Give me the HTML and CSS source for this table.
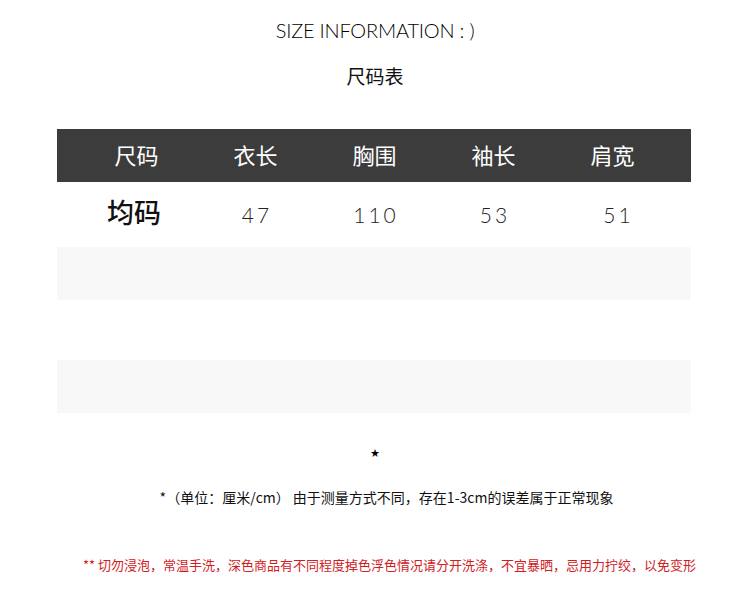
FILE: index.html
```html
<!DOCTYPE html>
<html lang="zh">
<head>
<meta charset="utf-8">
<link rel="stylesheet" href="styles.css">
</head>
<body>
<div class="page">
  <div class="title">SIZE INFORMATION : )</div>
  <div class="subtitle">尺码表</div>
  <div class="table">
    <div class="row head">
      <div class="cell">尺码</div>
      <div class="cell">衣长</div>
      <div class="cell">胸围</div>
      <div class="cell">袖长</div>
      <div class="cell">肩宽</div>
    </div>
    <div class="row data">
      <div class="cell size">均码</div>
      <div class="cell num">47</div>
      <div class="cell num">110</div>
      <div class="cell num">53</div>
      <div class="cell num last">51</div>
    </div>
    <div class="row empty gray"></div>
    <div class="row empty white"></div>
    <div class="row empty gray"></div>
  </div>
  <div class="star">★</div>
  <div class="note">*（单位：厘米/cm） 由于测量方式不同，存在1-3cm的误差属于正常现象</div>
  <div class="warn">** 切勿浸泡，常温手洗，深色商品有不同程度掉色浮色情况请分开洗涤，不宜暴晒，忌用力拧绞，以免变形</div>
</div>
</body>
</html>
```
FILE: styles.css
```css
html, body {
  margin: 0;
  padding: 0;
  background: #fff;
}
.page {
  width: 750px;
  height: 606px;
  font-family: "Noto Sans CJK SC", "Noto Sans", sans-serif;
  color: #111;
}
.title {
  padding-top: 17px;
  height: 26px;
  line-height: 26px;
  text-align: center;
  font-family: "Lato", "Noto Sans", sans-serif;
  font-weight: 300;
  font-size: 20px;
  letter-spacing: -0.2px;
  color: #000;
}
.subtitle {
  margin-top: 20px;
  height: 26px;
  line-height: 26px;
  text-align: center;
  font-size: 19px;
  color: #111;
}
.table {
  margin: 40px 59px 0 57px;
}
.row {
  display: grid;
  grid-template-columns: repeat(5, 119px);
  padding-left: 20px;
}
.head {
  height: 53px;
  background: #3c3c3c;
  color: #fff;
  align-items: center;
}
.head .cell {
  text-align: center;
  font-size: 22px;
  line-height: 26px;
  margin-top: -4px;
}
.data {
  height: 65px;
  align-items: center;
}
.data .cell {
  text-align: center;
}
.size {
  font-size: 27px;
  font-weight: 500;
  line-height: 30px;
  margin-top: -6px;
  margin-left: -5px;
}
.num {
  font-family: "Lato", "Noto Sans", sans-serif;
  font-weight: 300;
  font-size: 21px;
  letter-spacing: 3px;
  line-height: 28px;
  padding-left: 3px;
  color: #222;
}
.num.last {
  padding-left: 12px;
}
.empty {
  height: 53px;
}
.empty.white {
  height: 60px;
}
.gray {
  background: #f8f8f8;
}
.star {
  margin-top: 33px;
  text-align: center;
  font-size: 9px;
  line-height: 14px;
  color: #000;
}
.note {
  margin-top: 28px;
  text-align: center;
  font-size: 14px;
  line-height: 18px;
  color: #111;
  padding-left: 23px;
}
.warn {
  margin-top: 51px;
  text-align: center;
  font-size: 13px;
  line-height: 16px;
  color: #d0201e;
  padding-left: 29px;
}
```
